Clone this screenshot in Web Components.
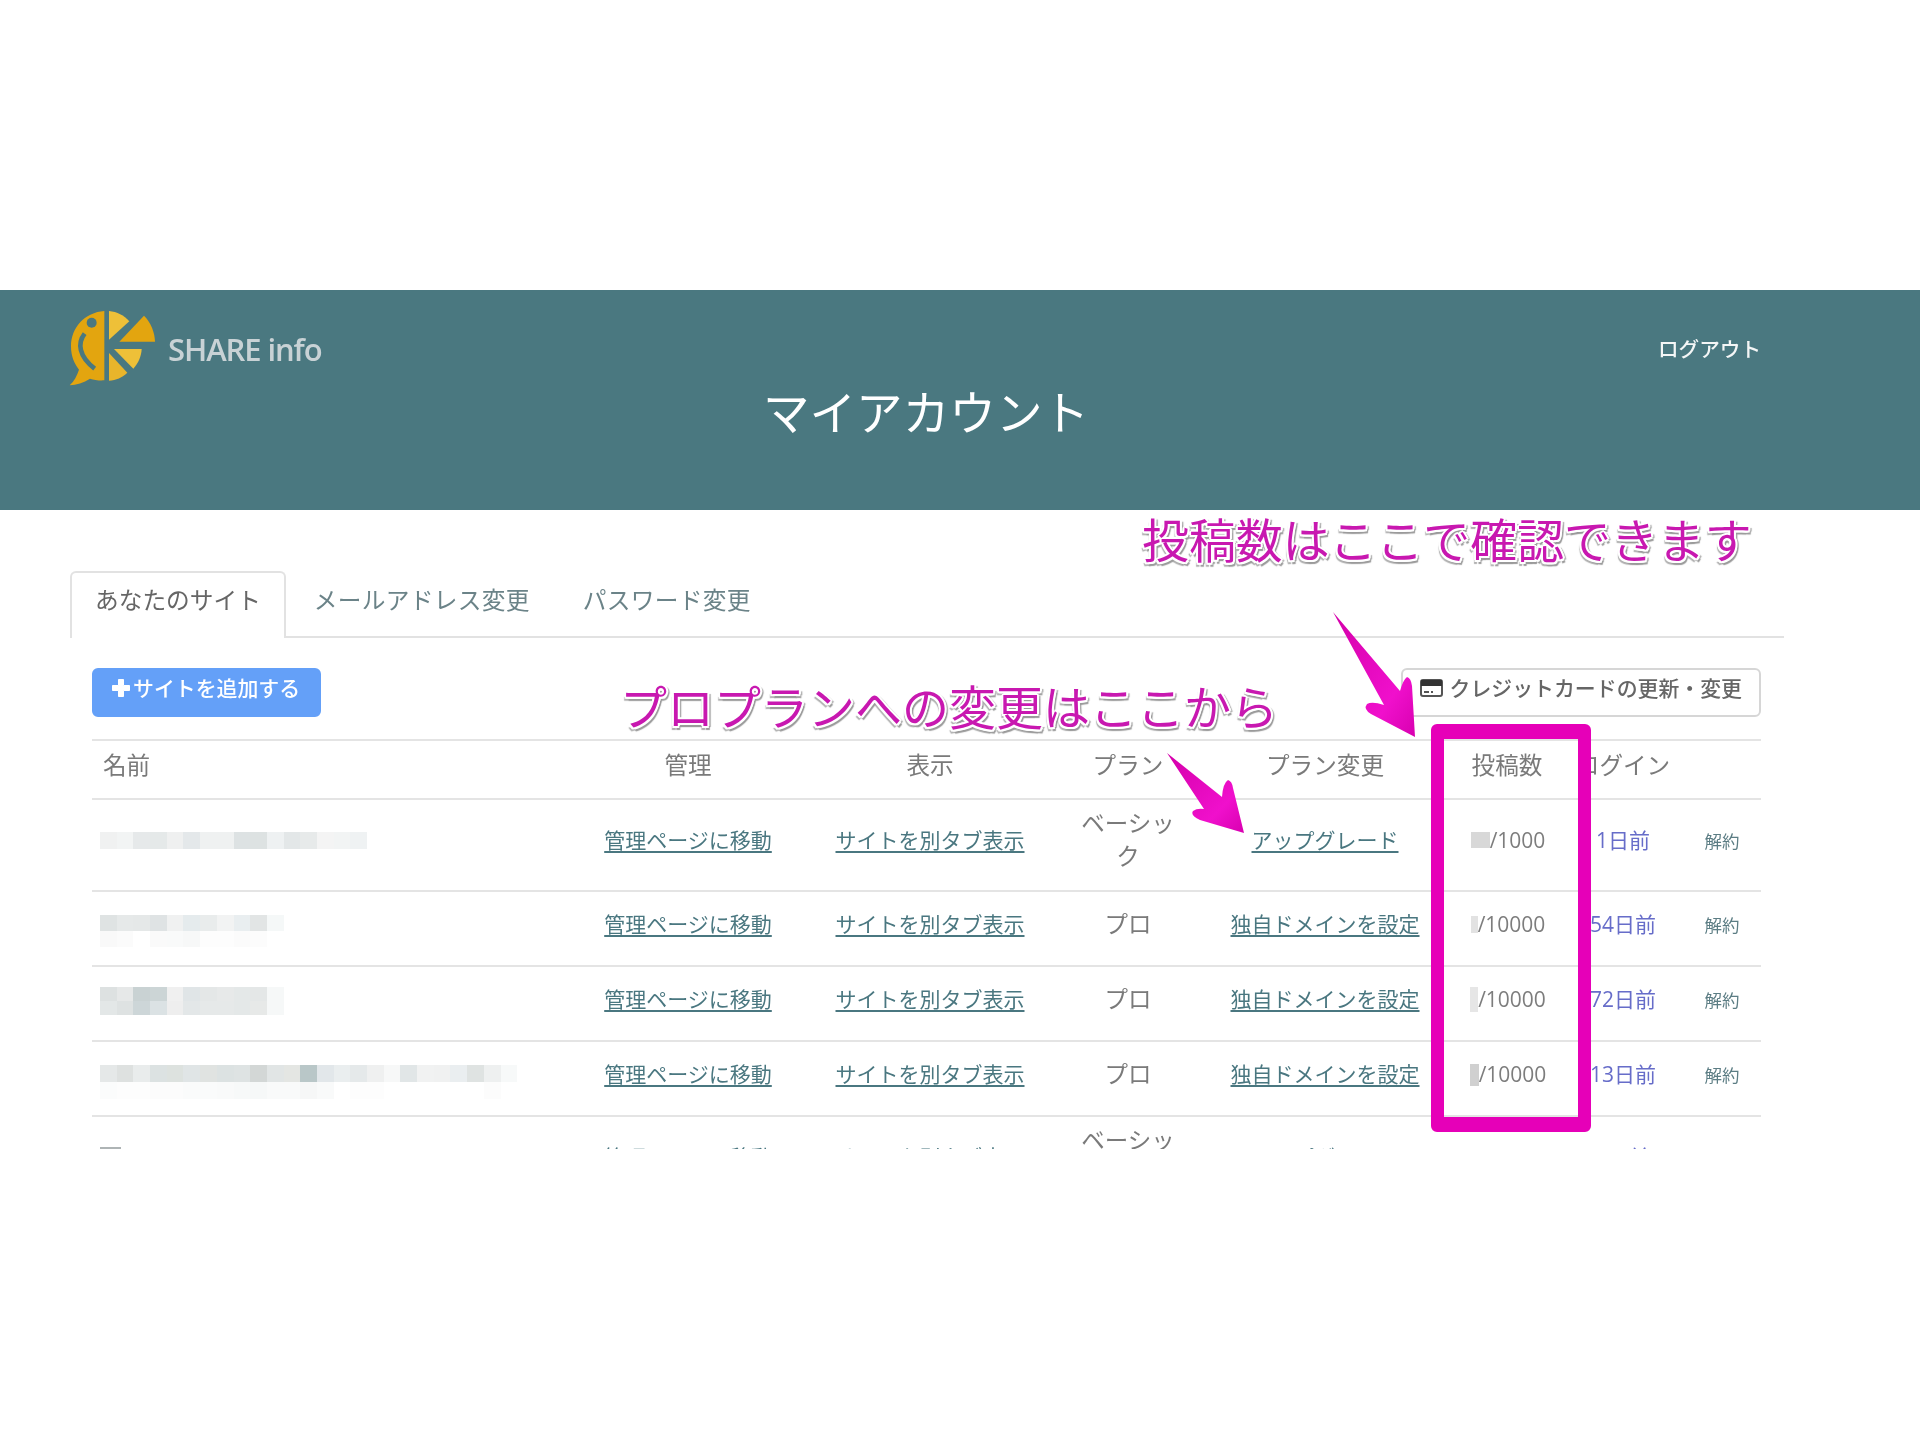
<!DOCTYPE html>
<html lang="ja"><head><meta charset="utf-8"><title>マイアカウント</title>
<style>
html,body{margin:0;padding:0;background:#fff}
body{font-family:"Open Sans","Noto Sans CJK JP",sans-serif;color:#777}
</style></head><body>
<app-page>
  <top-header slot="header">
    <share-logo slot="logo"></share-logo>
    <span slot="logout">ログアウト</span>
    <span slot="title">マイアカウント</span>
  </top-header>
  <tab-bar slot="tabs">
    <tab-item active>あなたのサイト</tab-item>
    <tab-item>メールアドレス変更</tab-item>
    <tab-item>パスワード変更</tab-item>
  </tab-bar>
  <action-bar slot="actions">
    <action-button slot="left" kind="primary" icon="plus">サイトを追加する</action-button>
    <action-button slot="right" icon="card">クレジットカードの更新・変更</action-button>
  </action-bar>
  <site-table slot="table">
    <site-row head h="59">
      <t-cell align="left">名前</t-cell><t-cell>管理</t-cell><t-cell>表示</t-cell><t-cell>プラン</t-cell><t-cell>プラン変更</t-cell><t-cell>投稿数</t-cell><t-cell>ログイン</t-cell><t-cell></t-cell>
    </site-row>
    <site-row h="92">
      <redact-blocks top="32" rowh="17" rows="f0f1f1 f2f4f4 e6e9ea e5e9e9 eff0f0 e4e8ea eff1f1 eff1f1 dde2e3 dde2e2 eef1f2 e3e7e8 e7eaea f4f4f4 f2f4f4 eff2f3"></redact-blocks>
      <t-cell link>管理ページに移動</t-cell><t-cell link>サイトを別タブ表示</t-cell><t-cell plan>ベーシック</t-cell><t-cell link>アップグレード</t-cell>
      <post-count block="19" bh="16" color="#d8d8d8">/1000</post-count><t-cell login>1日前</t-cell><t-cell cancel>解約</t-cell>
    </site-row>
    <site-row h="75">
      <redact-blocks top="23" rowh="16" rows="dfe3e3 e6e9e9 e5e8e8 dfe3e4 f0f1f1 e5ebed e9ecec f2f3f3 e9eef0 e2e5e5 f5f8f8|f9f9f9 fbfbfb ffffff fafafa f9fafa f7f8f8 fdfdfd fdfdfd fbfbfb fcfcfc"></redact-blocks>
      <t-cell link>管理ページに移動</t-cell><t-cell link>サイトを別タブ表示</t-cell><t-cell plan>プロ</t-cell><t-cell link>独自ドメインを設定</t-cell>
      <post-count block="7" bh="17" color="#e2e2e2">/10000</post-count><t-cell login>54日前</t-cell><t-cell cancel>解約</t-cell>
    </site-row>
    <site-row h="75">
      <redact-blocks top="20" rowh="14" rows="dde1e1 e6e8e8 c9d2d3 ccd5d6 f0f0f0 e0e5e7 e4e7e7 e7e9e9 e4e8e8 e4e7e7 f6f8f8|e3e7e7 dee2e2 cdd6d8 dbe2e4 eeeeee e3e7e8 e6e9e9 e6e9e9 e4e8e8 e7e9e8 f6f8f8"></redact-blocks>
      <t-cell link>管理ページに移動</t-cell><t-cell link>サイトを別タブ表示</t-cell><t-cell plan>プロ</t-cell><t-cell link>独自ドメインを設定</t-cell>
      <post-count block="8" bh="25" color="#e6e6e6">/10000</post-count><t-cell login>72日前</t-cell><t-cell cancel>解約</t-cell>
    </site-row>
    <site-row h="75">
      <redact-blocks top="23" rowh="17" rows="e5e8e8 dee1e0 e9ecec dce2e2 dde2df e0e5e6 e0e3e1 dce2e2 dee3e3 d3d7d6 e1e5e5 e4e6e3 b9c7c8 e2e7ea eaeeef e5e9ea eff0f0 f7f8f8 e1e6e7 f1f2f2 f0f1f1 eaeef0 dfe3e2 eef0f0 f7f9f9|fbfcfc fdfdfd fdfdfd fcfcfc fcfcfc fafbfb fafbfb f9fafa f7f9f9 f6f8f8 f9fafa f9fafa f6f7f7 f9fafa ffffff fdfdfd fdfdfd ffffff ffffff ffffff ffffff ffffff ffffff fcfcfc"></redact-blocks>
      <t-cell link>管理ページに移動</t-cell><t-cell link>サイトを別タブ表示</t-cell><t-cell plan>プロ</t-cell><t-cell link>独自ドメインを設定</t-cell>
      <post-count block="9" bh="22" color="#d0d0d0">/10000</post-count><t-cell login>13日前</t-cell><t-cell cancel>解約</t-cell>
    </site-row>
    <site-row h="92">
      <redact-blocks top="30" rows="aeb4b5" cell="21" rowh="3"></redact-blocks>
      <t-cell link>管理ページに移動</t-cell><t-cell link>サイトを別タブ表示</t-cell><t-cell plan>ベーシック</t-cell><t-cell link>アップグレード</t-cell>
      <post-count block="12" bh="16" color="#e2e2e2">/1000</post-count><t-cell login>3日前</t-cell><t-cell cancel>解約</t-cell>
    </site-row>
  </site-table>
  <annotation-layer slot="overlay">
    <call-out x="1142" y="510" size="46.9">投稿数はここで確認できます</call-out>
    <call-out x="620" y="677" size="47">プロプランへの変更はここから</call-out>
  </annotation-layer>
</app-page>

<script>
function shadow(el, html){ el.attachShadow({mode:'open'}).innerHTML = html; return el.shadowRoot; }

customElements.define('app-page', class extends HTMLElement{
  constructor(){super();shadow(this,`<style>
    :host{display:block;position:relative;width:1920px;height:1440px;overflow:hidden;background:#fff;filter:blur(.45px)}
    .top{height:290px}
    .body{height:639px;overflow:hidden;box-sizing:border-box;padding:61px 136px 0 70px}
    .inner{padding:30px 0 0 22px;width:1669px}
  </style>
  <div class="top"></div>
  <slot name="header"></slot>
  <div class="body">
    <slot name="tabs"></slot>
    <div class="inner"><slot name="actions"></slot><slot name="table"></slot></div>
  </div>
  <slot name="overlay"></slot>`);}
});

customElements.define('top-header', class extends HTMLElement{
  constructor(){super();shadow(this,`<style>
    :host{display:block;height:220px;box-sizing:border-box;background:#4a7880;padding-top:10px;color:#fff}
    .row{display:flex;justify-content:space-between;align-items:center;height:98px;padding:0 159px 0 60px}
    .logout{font-size:20.6px;font-weight:500;color:#f4f6f6;line-height:30px}
    .title{margin-top:-6px;padding-right:68px;text-align:center;font-size:46.6px;line-height:40px;font-weight:400;color:#fff}
  </style>
  <div class="row"><slot name="logo"></slot><span class="logout"><slot name="logout"></slot></span></div>
  <div class="title"><slot name="title"></slot></div>`);}
});

customElements.define('share-logo', class extends HTMLElement{
  constructor(){super();shadow(this,`<style>
    :host{display:flex;align-items:center;height:100px}
    svg{display:block;width:110px;height:100px;flex:none}
    span{margin-left:-2px;font:600 31px/40px "Open Sans",sans-serif;letter-spacing:-1.1px;color:#c8d2d5}
  </style>
  <svg viewBox="0 0 330 300" aria-hidden="true">
    <path d="M133 36C75 40 33 85 33 142c0 30 10 52 24 70c-6 18-14 34-28 47c20-1 42-7 61-20c13 4 27 6 43 5z" fill="#e3a50f"/>
    <circle cx="95" cy="71" r="15" fill="#4a7880"/>
    <path d="M74 104C52 132 56 172 104 209" fill="none" stroke="#4a7880" stroke-width="14"/>
    <path d="M147 36c24 2 45 13 61 31L147 122z" fill="#eec038"/>
    <path d="M252 50c20 20 32 48 33 78H178z" fill="#e3a50f"/>
    <path d="M162 150H245c-1 22-10 42-25 59z" fill="#eec038"/>
    <path d="M147 162L202 221c-15 14-34 23-55 24z" fill="#e9b52b"/>
  </svg><span>SHARE info</span>`);}
});

customElements.define('tab-bar', class extends HTMLElement{
  constructor(){super();shadow(this,`<style>
    :host{display:flex;gap:3px;height:67px;box-sizing:border-box;border-bottom:2px solid #e2e2e2}
  </style><slot></slot>`);}
});

customElements.define('tab-item', class extends HTMLElement{
  constructor(){super();shadow(this,`<style>
    :host{display:block;box-sizing:border-box;height:67px;padding:0 23px 10px;border:2px solid transparent;border-bottom:0;border-radius:6px 6px 0 0;
      font-size:23.7px;line-height:54px;color:#6b8388;white-space:nowrap;letter-spacing:.3px}
    :host([active]){border-color:#e2e2e2;background:#fff;color:#666;letter-spacing:0}
  </style><slot></slot>`);}
});

customElements.define('action-bar', class extends HTMLElement{
  constructor(){super();shadow(this,`<style>
    :host{display:flex;justify-content:space-between;height:49px;margin-bottom:23px}
  </style><slot name="left"></slot><slot name="right"></slot>`);}
});

customElements.define('action-button', class extends HTMLElement{
  constructor(){super();
    const icons={
      plus:`<svg width="20" height="20" viewBox="0 0 20 20"><path d="M7.5 1.500h5v6h6v5h-6v6h-5v-6h-6v-5h6z" fill="#fff" stroke="#fff" stroke-linejoin="round"/></svg>`,
      card:`<svg width="23" height="18" viewBox="0 0 23 18"><rect x="1" y="1" width="21" height="16" rx="2" fill="#fff" stroke="#555" stroke-width="2"/><rect x="1" y="1" width="21" height="6" fill="#333"/><path d="M4 13h5M11 13h2" stroke="#555" stroke-width="2"/></svg>`
    };
    shadow(this,`<style>
    :host{display:flex;align-items:center;box-sizing:border-box;height:49px;border-radius:6px;font-size:20.9px;white-space:nowrap;padding:0 17px 10px 17px;gap:2px;
      border:2px solid #d6d6d6;color:#666;background:#fff;line-height:30px;font-weight:500}
    :host([kind=primary]){background:#64a0f8;border-color:#64a0f8;color:#fff;font-weight:500;padding-left:17px;padding-right:18px;width:229px}
    svg{flex:none;display:block;margin-right:5px}
    :host([kind=primary]) svg{margin-right:0}
  </style><span id="i"></span><slot></slot>`);
    this._icons=icons;
  }
  connectedCallback(){this.shadowRoot.getElementById('i').innerHTML=this._icons[this.getAttribute('icon')]||'';}
});

customElements.define('site-table', class extends HTMLElement{
  constructor(){super();shadow(this,`<style>:host{display:block;width:1669px;margin-top:-1px}</style><slot></slot>`);}
});

customElements.define('site-row', class extends HTMLElement{
  constructor(){super();shadow(this,`<style>
    :host{display:grid;grid-template-columns:478px 236px 248px 148px 246px 118px 114px 81px;grid-template-rows:100%;align-items:center;box-sizing:border-box;
      border-top:2px solid #e4e4e4;height:var(--h,75px);padding-bottom:var(--pb,8px);font-size:21px;line-height:33px;overflow:hidden}
    :host([head]){font-size:23.6px}
    slot{display:contents}
  </style><slot></slot>`);}
  connectedCallback(){
    const h=+(this.getAttribute('h')||75);
    this.style.setProperty('--h',h+'px');
    this.style.setProperty('--pb',(h===92?10:8)+'px');
  }
});

customElements.define('t-cell', class extends HTMLElement{
  constructor(){super();shadow(this,`<style>
    :host{display:block;text-align:center;color:#7a7a7a;white-space:nowrap}
    :host([align=left]){text-align:left;padding-left:11px}
    :host([plan]){white-space:normal;font-size:23.5px;padding:0 17px;word-break:break-all}
    :host([login]){color:#676dc9}
    :host([cancel]){color:#5c7d84;font-size:17.5px;margin-top:2px;padding-left:3px}
    :host([link]) a{color:#4a7780;text-decoration:underline;text-underline-offset:3px}
  </style><span id="w"><slot></slot></span>`);}
  connectedCallback(){
    if(this.hasAttribute('link')){
      this.shadowRoot.getElementById('w').innerHTML='<a href="#"><slot></slot></a>';
    }
  }
});

customElements.define('post-count', class extends HTMLElement{
  constructor(){super();shadow(this,`<style>
    :host{display:flex;justify-content:center;align-items:center;color:#7d7d7d;font-size:21px;padding-left:2px}
    i{display:block}
  </style><i id="b"></i><slot></slot>`);}
  connectedCallback(){
    const b=this.shadowRoot.getElementById('b');
    b.style.width=this.getAttribute('block')+'px';
    b.style.height=this.getAttribute('bh')+'px';
    b.style.background=this.getAttribute('color');
  }
});

customElements.define('redact-blocks', class extends HTMLElement{
  constructor(){super();shadow(this,`<style>
    :host{display:block;align-self:start;padding-left:8px}
    .r{display:flex}
    .r i{display:block;flex:none}
  </style><div id="w"></div>`);}
  connectedCallback(){
    const cell=+(this.getAttribute('cell')||16.7), rh=+(this.getAttribute('rowh')||18);
    this.style.marginTop=(this.getAttribute('top')||0)+'px';
    const w=this.shadowRoot.getElementById('w');
    this.getAttribute('rows').split('|').forEach(line=>{
      const r=document.createElement('div');r.className='r';
      line.trim().split(/\s+/).forEach(c=>{
        const i=document.createElement('i');
        i.style.cssText=`width:${cell}px;height:${rh}px;background:#${c}`;
        r.appendChild(i);
      });
      w.appendChild(r);
    });
  }
});

customElements.define('annotation-layer', class extends HTMLElement{
  constructor(){super();shadow(this,`<style>
    :host{position:absolute;left:0;top:0;width:1920px;height:1440px;pointer-events:none}
    svg{position:absolute;left:0;top:0}
    .box{position:absolute;left:1431px;top:724px;width:160px;height:408px;box-sizing:border-box;border:solid #e600b8;border-width:15px 13px;border-radius:6px}
  </style>
  <svg width="1920" height="1440" viewBox="0 0 1920 1440" aria-hidden="true">
    <defs><linearGradient id="g" x1="0" y1="0" x2="1" y2="1"><stop offset="0" stop-color="#d400aa"/><stop offset=".7" stop-color="#f010cc"/><stop offset="1" stop-color="#d800b0"/></linearGradient></defs>
    <path d="M1333 612L1400 691Q1403 680 1407 677Q1411 678 1412 686L1415 737L1371 714Q1363 709 1367 704Q1372 701 1384 705z" fill="url(#g)"/>
    <path d="M1167 753L1222 797Q1223 783 1228 780Q1232 781 1233 788L1244 833L1200 820Q1190 815 1193 811Q1197 808 1204 809z" fill="url(#g)"/>
  </svg>
  <div class="box"></div><slot></slot>`);}
});

customElements.define('call-out', class extends HTMLElement{
  constructor(){super();shadow(this,`<style>
    :host{position:absolute;white-space:nowrap;line-height:60px;font-weight:400;color:#c818b0;
      text-shadow:-2px 0 0 #fff,2px 0 0 #fff,0 -2px 0 #fff,0 2px 0 #fff,-1.500px -1.500px 0 #fff,1.500px -1.500px 0 #fff,-1.500px 1.500px 0 #fff,1.500px 1.500px 0 #fff,
      2.500px 3.500px 1px #9a9a9a,-2px 3.500px 1px #b0b0b0,3.500px 1px 1px #b0b0b0}
  </style><slot></slot>`);}
  connectedCallback(){
    this.style.left=this.getAttribute('x')+'px';
    this.style.top=this.getAttribute('y')+'px';
    this.style.fontSize=this.getAttribute('size')+'px';
  }
});
</script>
</body></html>
